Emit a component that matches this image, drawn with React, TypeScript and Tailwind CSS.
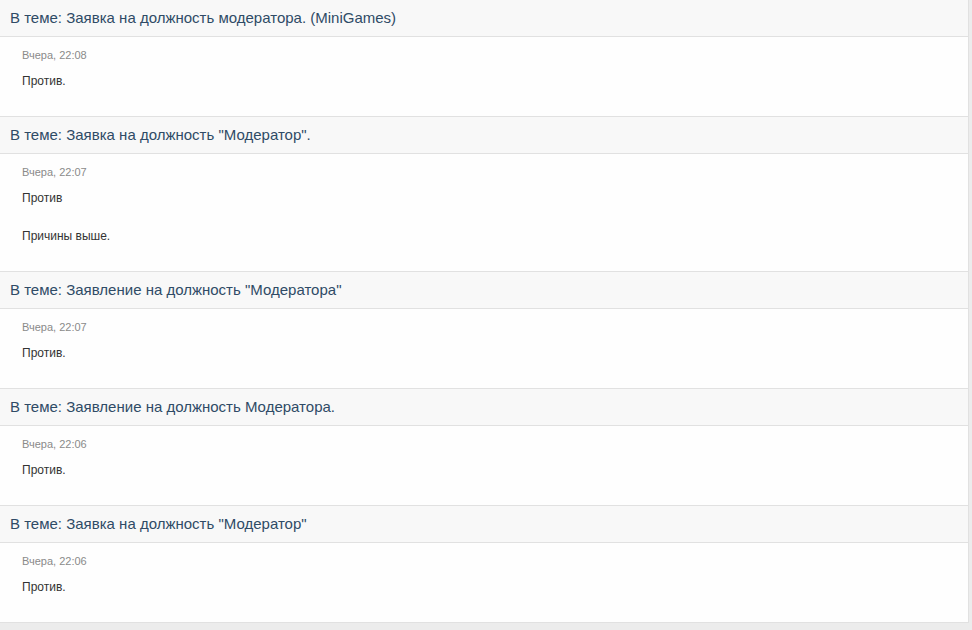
const posts = [
  { topic: 'Заявка на должность модератора. (MiniGames)', date: 'Вчера, 22:08', body: ['Против.'] },
  { topic: 'Заявка на должность "Модератор".', date: 'Вчера, 22:07', body: ['Против', 'Причины выше.'] },
  { topic: 'Заявление на должность "Модератора"', date: 'Вчера, 22:07', body: ['Против.'] },
  { topic: 'Заявление на должность Модератора.', date: 'Вчера, 22:06', body: ['Против.'] },
  { topic: 'Заявка на должность "Модератор"', date: 'Вчера, 22:06', body: ['Против.'] },
];

export default function App() {
  return (
    <div className="min-h-[630px] bg-[#ececec] pr-[3px] pb-[8px] font-['Liberation_Sans',Arial,sans-serif]">
      <div className="bg-white border-r border-b border-[#e1e1e1]">
        {posts.map((p, i) => (
          <div key={i} className={i > 0 ? 'border-t border-[#e1e1e1]' : ''}>
            <div className="h-[37px] flex items-center px-[10px] bg-[#f8f8f8] border-b border-[#e1e1e1] text-[15px] text-[#2f4b66]">
              В теме: {p.topic}
            </div>
            <div className="px-[22px] pt-[10px] pb-[5px] bg-[#fefefe]">
              <div className="text-[11px] leading-[16px] text-[#8a8a8a] mb-[10px]">{p.date}</div>
              {p.body.map((line, j) => (
                <p key={j} className="text-[12px] leading-[16px] text-[#333] mb-[22px]">
                  {line}
                </p>
              ))}
            </div>
          </div>
        ))}
      </div>
    </div>
  );
}
